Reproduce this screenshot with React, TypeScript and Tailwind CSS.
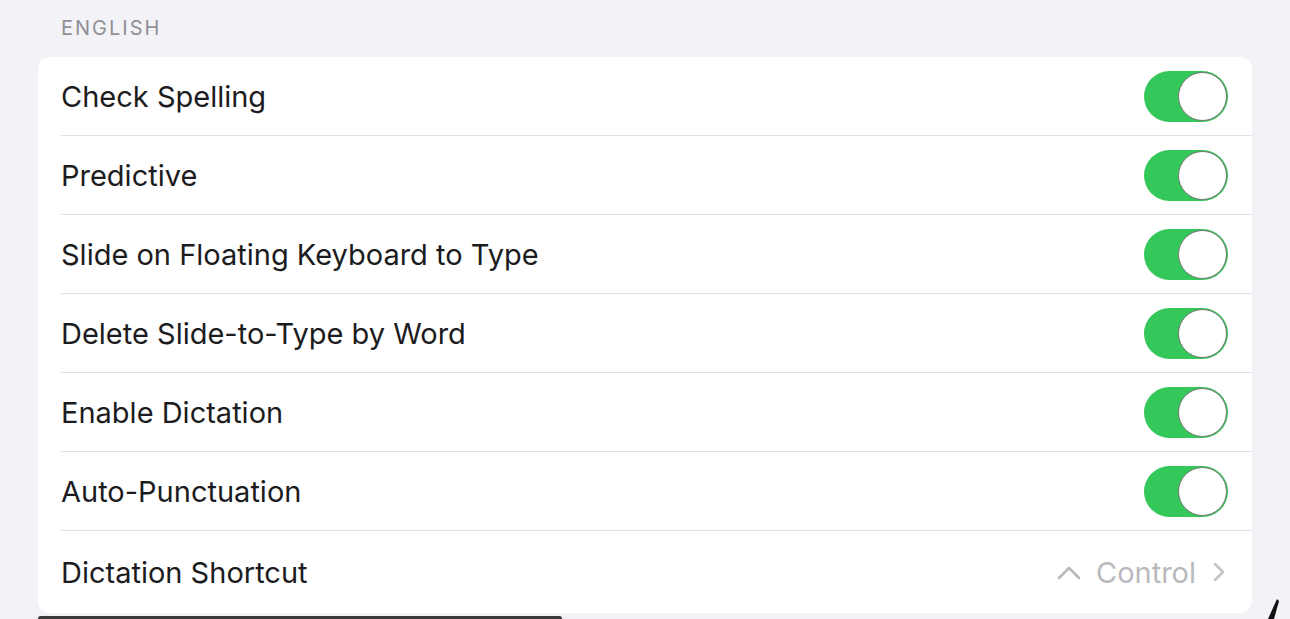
import React from "react";

const rows = [
  "Check Spelling",
  "Predictive",
  "Slide on Floating Keyboard to Type",
  "Delete Slide-to-Type by Word",
  "Enable Dictation",
  "Auto-Punctuation",
];

function Toggle() {
  return (
    <div className="flex h-[51px] w-[84px] items-center justify-end rounded-full bg-[#34c759] p-[1px]">
      <div className="h-[49px] w-[49px] rounded-full border-[1.5px] border-[#6f7370] bg-white" />
    </div>
  );
}

export default function App() {
  return (
    <div
      className="relative h-[619px] w-[1290px] overflow-hidden bg-[#f2f2f7] text-[#1c1c1e]"
      style={{ fontFamily: "Inter, 'Liberation Sans', sans-serif" }}
    >
      <div className="pl-[38px] pr-[38px]">
        {/* Section header */}
        <div className="flex h-[57px] items-center pb-[1px] pl-[23px] text-[20px] tracking-[2px] text-[#909095]">
          ENGLISH
        </div>

        {/* Group card */}
        <div className="overflow-hidden rounded-[12px] bg-white">
          {rows.map((label) => (
            <div key={label} className="flex h-[79px] items-center pl-[23px]">
              <div className="flex h-full flex-1 items-center justify-between border-b border-[#e2e2e6] pr-[24px]">
                <span className="text-[29px] leading-none">{label}</span>
                <Toggle />
              </div>
            </div>
          ))}
          <div className="flex h-[82px] items-center justify-between pl-[23px] pr-[26px]">
            <span className="text-[29px] leading-none">Dictation Shortcut</span>
            <div className="flex items-center gap-[14px] text-[29px] leading-none text-[#b9b9bd]">
              <svg width="26" height="16" viewBox="0 0 26 16" fill="none">
                <path d="M3 14 L13 4 L23 14" stroke="#b9b9bd" strokeWidth="2.6" strokeLinecap="round" strokeLinejoin="round" />
              </svg>
              <span>Control</span>
              <svg width="14" height="22" viewBox="0 0 14 22" fill="none" className="ml-[2px]">
                <path d="M3 3 L11 11 L3 19" stroke="#c4c4c8" strokeWidth="2.6" strokeLinecap="round" strokeLinejoin="round" />
              </svg>
            </div>
          </div>
        </div>
      </div>

      {/* bottom bar and pointer marks over content */}
      <div className="absolute bottom-[-2px] left-[38px] h-[5px] w-[524px] rounded-full bg-[#3a3a3c]" />
      <svg className="absolute bottom-0 right-[8px]" width="20" height="22" viewBox="0 0 20 22">
        <path d="M15 2 L17 4 L12 22 L6 22 Z" fill="#111" />
      </svg>
    </div>
  );
}
